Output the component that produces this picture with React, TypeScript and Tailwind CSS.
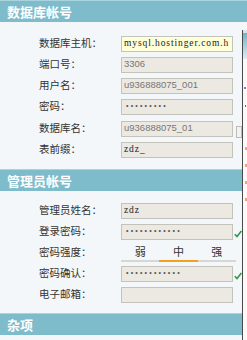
import React from 'react';

const cjk = { fontFamily: '"Noto Sans CJK SC", "Noto Sans", sans-serif' };
const mono = { fontFamily: '"Liberation Serif", "DejaVu Serif", serif' };
const sans = { fontFamily: '"Liberation Sans", Arial, sans-serif' };

function Header({ title }: { title: string }) {
  return (
    <div className="h-[22px] bg-[#7fbccb] border-t border-[#a9d3dd] flex items-center pl-[7px]">
      <span className="text-white text-[13px] font-bold leading-none" style={cjk}>
        {title}
      </span>
    </div>
  );
}

function Check() {
  return (
    <svg width="8" height="8" viewBox="0 0 8 8" className="ml-[1px] mt-[4px]">
      <path d="M0.8 4.2 L3 6.6 L7.4 1" fill="none" stroke="#2e9b4a" strokeWidth="1.6" />
    </svg>
  );
}

function Row({
  label,
  value,
  font = 'sans',
  yellow,
  check,
  className = '',
}: {
  label: string;
  value: string;
  font?: 'sans' | 'mono' | 'dots';
  yellow?: boolean;
  check?: boolean;
  className?: string;
}) {
  return (
    <div className={`h-[21px] flex items-center ${className}`}>
      <div className="w-[121px] pl-[39px] text-[10.5px] text-[#333] leading-none" style={cjk}>
        {label}
      </div>
      <div
        className={`w-[112px] h-[16px] border border-[#c4c3bb] flex items-center pl-[2px] overflow-hidden whitespace-nowrap ${
          yellow ? 'bg-[#ffffd8]' : 'bg-[#ebe9e2]'
        }`}
      >
        {font === 'mono' && (
          <span className="text-[9.5px] text-[#222] tracking-[0.9px]" style={mono}>
            {value}
          </span>
        )}
        {font === 'sans' && (
          <span className="text-[9.5px] text-[#777]" style={sans}>
            {value}
          </span>
        )}
        {font === 'dots' && (
          <span className="text-[7px] text-[#555] tracking-[2.2px] pl-[2px]" style={sans}>
            {value}
          </span>
        )}
      </div>
      {check && <Check />}
    </div>
  );
}

export default function App() {
  return (
    <div className="relative w-[247px] h-[340px] overflow-hidden bg-[#f3f7fa]">
      <Header title="数据库帐号" />
      <div className="pt-[11px] pb-[9px]">
        <Row label="数据库主机：" value="mysql.hostinger.com.h" font="mono" yellow />
        <Row label="端口号：" value="3306" />
        <Row label="用户名：" value="u936888075_001" />
        <Row label="密码：" value="•••••••••" font="dots" />
        <Row label="数据库名：" value="u936888075_01" className="mt-[1px]" />
        <Row label="表前缀：" value="zdz_" font="mono" />
      </div>

      <Header title="管理员帐号" />
      <div className="pt-[9px] pb-[8px]">
        <Row label="管理员姓名：" value="zdz" font="mono" />
        <Row label="登录密码：" value="••••••••••••" font="dots" check />
        <div className="h-[21px] flex items-center">
          <div className="w-[121px] pl-[39px] text-[10.5px] text-[#333] leading-none" style={cjk}>
            密码强度：
          </div>
          <div className="w-[115px] flex border-b-2 border-[#d6d6d2] text-[11px] text-[#333]" style={cjk}>
            <div className="flex-1 text-center pb-[1px]">弱</div>
            <div className="flex-1 text-center pb-[1px] border-b-2 border-[#f2a11d] -mb-[2px]">中</div>
            <div className="flex-1 text-center pb-[1px]">强</div>
          </div>
        </div>
        <Row label="密码确认：" value="••••••••••••" font="dots" check />
        <Row label="电子邮箱：" value="" />
      </div>

      <Header title="杂项" />

      {/* popup overlapping at right edge */}
      <div className="absolute left-[242px] top-[30px] bottom-0 w-[5px] border-l border-[#4a4a4a] bg-[#fbfaf8]">
        <div className="h-[3px] bg-[#d8e6ea]" />
        <div className="h-[26px] bg-gradient-to-b from-[#6fb3c6] to-[#dceef3]" />
        <div className="mt-[28px] ml-[1px] w-[2px] h-[2px] bg-[#9a6fd0]" />
        <div className="mt-[16px] ml-[2px] w-[1px] h-[2px] bg-[#666]" />
        <div className="mt-[40px] ml-[2px] w-[2px] h-[3px] bg-[#f0a080]" />
        <div className="mt-[14px] ml-[2px] w-[2px] h-[3px] bg-[#f0a080]" />
        <div className="mt-[14px] ml-[2px] w-[2px] h-[3px] bg-[#f0a080]" />
        <div className="mt-[14px] ml-[2px] w-[2px] h-[3px] bg-[#f0a080]" />
      </div>
      <div className="absolute left-[236px] top-[126px] w-[6px] h-[12px] border border-[#bbb] bg-[#f3f3f3]" />
    </div>
  );
}
